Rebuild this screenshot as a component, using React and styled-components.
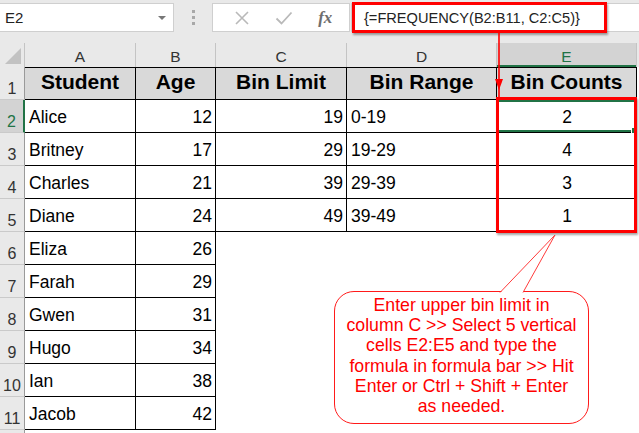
import React from 'react';
import styled, { createGlobalStyle } from 'styled-components';

const GlobalStyle = createGlobalStyle`
    body {
        margin: 0;
        background: #fff;
        overflow: hidden;
        font-family: "Liberation Sans", Arial, sans-serif;
    }
`;

const Page = styled.div`
    position: relative;
    width: 639px;
    height: 433px;
    overflow: hidden;
    background: #fff;
`;

const FormulaBar = styled.div`
    display: flex;
    align-items: flex-start;
    height: 43px;
    padding-top: 3px;
    box-sizing: border-box;
    background: #e9e9e9;
`;

const NameBox = styled.div`
    display: flex;
    align-items: center;
    justify-content: space-between;
    width: 174px;
    height: 29px;
    box-sizing: border-box;
    padding: 0 7px 0 5px;
    background: #fff;
    border: 1px solid #cfcfcf;
    border-left: none;
    font-size: 15px;
    color: #222;
`;

const DropArrow = styled.span`
    width: 0;
    height: 0;
    border-left: 4px solid transparent;
    border-right: 4px solid transparent;
    border-top: 4px solid #777;
`;

const Grip = styled.div`
    display: flex;
    flex-direction: column;
    gap: 3px;
    width: 38px;
    align-items: center;
    padding-top: 7px;

    span {
        width: 3px;
        height: 3px;
        background: #a8a8a8;
    }
`;

const ButtonGroup = styled.div`
    display: flex;
    align-items: center;
    justify-content: space-around;
    width: 138px;
    height: 29px;
    box-sizing: border-box;
    padding: 0 4px 0 8px;
    background: #fff;
    border: 1px solid #cfcfcf;
`;

const Fx = styled.span`
    font-family: "Liberation Serif", "Times New Roman", serif;
    font-style: italic;
    font-weight: 700;
    font-size: 17px;
    color: #6e6e6e;
`;

const FormulaInput = styled.div`
    flex: 1;
    display: flex;
    align-items: center;
    height: 29px;
    box-sizing: border-box;
    padding-left: 12px;
    margin-left: 1px;
    background: #fff;
    border: 1px solid #cfcfcf;
    border-right: none;
    font-size: 14.6px;
    color: #222;
`;

const Sheet = styled.div`
    display: grid;
    grid-template-columns: 25px 111px 80px 131px 150px 140px 2px;
    grid-template-rows: 24px;
    grid-auto-rows: 33px;
`;

const Corner = styled.div`
    position: relative;
    background: #e9e9e9;
    border-right: 1px solid #c4c4c4;

    &::after {
        content: '';
        position: absolute;
        right: 3px;
        bottom: 3px;
        border-left: 16px solid transparent;
        border-bottom: 16px solid #c2c2c2;
    }
`;

const ColHead = styled.div`
    display: flex;
    align-items: center;
    justify-content: center;
    padding-top: 4px;
    box-sizing: border-box;
    font-size: 15.5px;
    color: ${p => (p.$active ? '#217346' : '#333')};
    background: ${p => (p.$active ? '#d3d3d3' : '#e9e9e9')};
    border-right: 1px solid #c4c4c4;
    box-shadow: ${p => (p.$active ? 'inset 0 -2px 0 #217346' : 'none')};
`;

const RowHead = styled.div`
    display: flex;
    align-items: center;
    justify-content: center;
    padding-top: 12px;
    box-sizing: border-box;
    font-size: 16px;
    color: ${p => (p.$active ? '#217346' : '#333')};
    background: ${p => (p.$active ? '#d3d3d3' : '#e9e9e9')};
    border-bottom: 1px solid #cacaca;
    border-right: ${p => (p.$active ? '2px solid #217346' : '1px solid #9a9a9a')};
`;

const Cell = styled.div`
    position: relative;
    display: flex;
    align-items: center;
    justify-content: ${p =>
        p.$align === 'right' ? 'flex-end' : p.$align === 'center' ? 'center' : 'flex-start'};
    box-sizing: border-box;
    padding: ${p => (p.$bold ? '0 3px 4px' : '2px 3px 0 4px')};
    white-space: nowrap;
    font-size: ${p => (p.$bold ? '21px' : '17.5px')};
    font-weight: ${p => (p.$bold ? 700 : 400)};
    color: #000;
    background: ${p => (p.$bold ? '#d9d9d9' : '#fff')};
    border-right: ${p => (p.$boxed ? '1px solid #000' : 'none')};
    border-bottom: ${p => (p.$boxed ? '1px solid #000' : 'none')};
    border-top: ${p => (p.$bold ? '1px solid #000' : 'none')};
    box-shadow: ${p => (p.$selected ? 'inset 0 0 0 2px #217346' : 'none')};
`;

const Filler = styled.div`
    background: ${p => (p.$head ? '#e9e9e9' : '#fff')};
`;

const FillHandle = styled.span`
    position: absolute;
    right: -2px;
    bottom: -2px;
    width: 5px;
    height: 5px;
    background: #217346;
    border: 1px solid #fff;
`;

const HighlightBox = styled.div`
    position: absolute;
    left: ${p => p.$x}px;
    top: ${p => p.$y}px;
    width: ${p => p.$w}px;
    height: ${p => p.$h}px;
    box-sizing: border-box;
    border: 3px solid #ff0000;
    box-shadow: 1px 2px 2px rgba(0, 0, 0, 0.35);
    pointer-events: none;
`;

const Overlay = styled.svg`
    position: absolute;
    left: 0;
    top: 0;
    pointer-events: none;
`;

const Bubble = styled.div`
    position: absolute;
    left: 334px;
    top: 291px;
    width: 255px;
    height: 133px;
    box-sizing: border-box;
    padding-top: 3px;
    background: #fff;
    border: 1.5px solid #ff1a1a;
    border-radius: 20px;
    text-align: center;
    font-size: 17.7px;
    line-height: 20.2px;
    color: #ff0000;
`;

const columns = ['A', 'B', 'C', 'D', 'E'];

const header = ['Student', 'Age', 'Bin Limit', 'Bin Range', 'Bin Counts'];

const rows = [
    ['Alice', 12, 19, '0-19', 2],
    ['Britney', 17, 29, '19-29', 4],
    ['Charles', 21, 39, '29-39', 3],
    ['Diane', 24, 49, '39-49', 1],
    ['Eliza', 26],
    ['Farah', 29],
    ['Gwen', 31],
    ['Hugo', 34],
    ['Ian', 38],
    ['Jacob', 42],
];

const aligns = ['left', 'right', 'right', 'left', 'center'];

const CrossIcon = () => (
    <svg width="16" height="16" viewBox="0 0 16 16">
        <path d="M2 2 L14 14 M14 2 L2 14" stroke="#b9b9b9" strokeWidth="1.6" fill="none" />
    </svg>
);

const CheckIcon = () => (
    <svg width="18" height="16" viewBox="0 0 18 16">
        <path d="M1.5 8.5 L6.5 13.5 L16.5 2.5" stroke="#b9b9b9" strokeWidth="1.8" fill="none" />
    </svg>
);

const App = () => {
    return (
        <Page>
            <GlobalStyle />
            <FormulaBar>
                <NameBox>
                    E2
                    <DropArrow />
                </NameBox>
                <Grip>
                    <span />
                    <span />
                    <span />
                </Grip>
                <ButtonGroup>
                    <CrossIcon />
                    <CheckIcon />
                    <Fx>fx</Fx>
                </ButtonGroup>
                <FormulaInput>{'{=FREQUENCY(B2:B11, C2:C5)}'}</FormulaInput>
            </FormulaBar>

            <Sheet>
                <Corner />
                {columns.map(c => (
                    <ColHead key={c} $active={c === 'E'}>{c}</ColHead>
                ))}
                <Filler $head />

                <RowHead>1</RowHead>
                {header.map(h => (
                    <Cell key={h} $bold $boxed $align="center">{h}</Cell>
                ))}
                <Filler />

                {rows.map((row, i) => (
                    <React.Fragment key={row[0]}>
                        <RowHead $active={i === 0}>{i + 2}</RowHead>
                        {aligns.map((a, j) => (
                            <Cell
                                key={j}
                                $align={a}
                                $boxed={i < 4 || j < 2}
                                $selected={i === 0 && j === 4}
                            >
                                {row[j]}
                                {i === 0 && j === 4 && <FillHandle />}
                            </Cell>
                        ))}
                        <Filler />
                    </React.Fragment>
                ))}

                {/* row 12 header: only its top edge shows in the window */}
                <RowHead />
            </Sheet>

            <HighlightBox $x={352} $y={2} $w={255} $h={31} />
            <HighlightBox $x={496} $y={97} $w={141} $h={136} />

            <Bubble>
                Enter upper bin limit in<br />
                column C &gt;&gt; Select 5 vertical<br />
                cells E2:E5 and type the<br />
                formula in formula bar &gt;&gt; Hit<br />
                Enter or Ctrl + Shift + Enter<br />
                as needed.
            </Bubble>

            <Overlay width="639" height="433">
                <line x1="499" y1="33" x2="499" y2="97" stroke="#ff0000" strokeWidth="1.6" />
                <polygon points="495,79 503,79 499,90" fill="#ff0000" />
                <polygon points="500,293 555,235 523,293" fill="#fff" />
                <polyline points="500,292.5 555,235 523,292.5" fill="none" stroke="#ff3b3b" strokeWidth="1" />
            </Overlay>
        </Page>
    );
};

export default App;
